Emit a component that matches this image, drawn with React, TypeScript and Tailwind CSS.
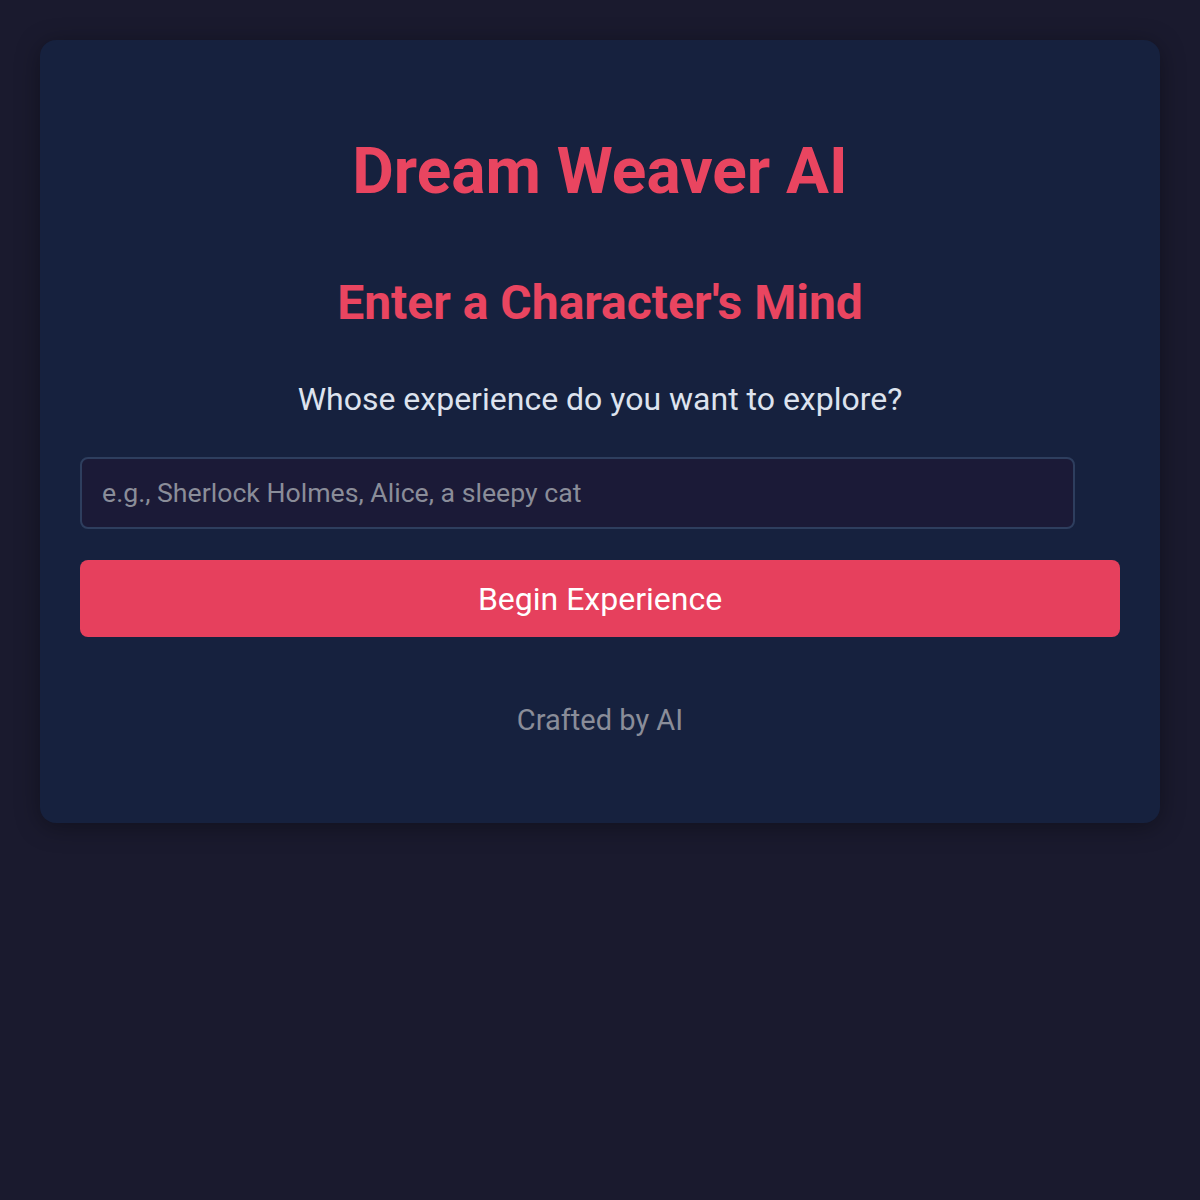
import React, { useState } from 'react';

const App: React.FC = () => {
  const [character, setCharacter] = useState('');

  return (
    <div className="min-h-screen bg-[#1a1a2e] p-10 font-['Roboto',sans-serif]">
      {/* Card */}
      <div className="bg-[#16213e] rounded-2xl shadow-[0_4px_24px_rgba(0,0,0,0.35)] px-10 pt-[94px] pb-[86px] text-center">
        <h1 className="text-[64px] leading-[76px] font-bold text-[#e94560]">Dream Weaver AI</h1>

        <h2 className="mt-[65px] text-[48px] leading-[56px] font-bold text-[#e94560]">
          Enter a Character's Mind
        </h2>

        <p className="mt-[49px] text-[32px] leading-[38px] text-[#dde3ee]">
          Whose experience do you want to explore?
        </p>

        <input
          type="text"
          value={character}
          onChange={(e) => setCharacter(e.target.value)}
          placeholder="e.g., Sherlock Holmes, Alice, a sleepy cat"
          className="mt-[39px] block w-[995px] h-[72px] px-5 bg-[#1b1a37] border-2 border-[#2e3e5e] rounded-lg text-[26.67px] text-[#e0e0e0] placeholder:text-[#8a8d99] focus:outline-none"
        />

        <button className="mt-[31px] block w-full h-[77px] bg-[#e6405d] rounded-lg text-[32px] text-white">
          Begin Experience
        </button>

        <p className="mt-[66px] text-[29px] leading-[34px] text-[#8a8d99]">Crafted by AI</p>
      </div>
    </div>
  );
};

export default App;
